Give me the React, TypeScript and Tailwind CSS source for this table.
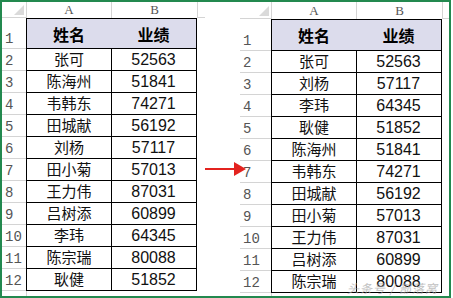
// App.tsx — two Excel ranges, before / after sort
const before: [string, string][] = [
  ["张可", "52563"],
  ["陈海州", "51841"],
  ["韦韩东", "74271"],
  ["田城献", "56192"],
  ["刘杨", "57117"],
  ["田小菊", "57013"],
  ["王力伟", "87031"],
  ["吕树添", "60899"],
  ["李玮", "64345"],
  ["陈宗瑞", "80088"],
  ["耿健", "51852"],
];

const after: [string, string][] = [
  ["张可", "52563"],
  ["刘杨", "57117"],
  ["李玮", "64345"],
  ["耿健", "51852"],
  ["陈海州", "51841"],
  ["韦韩东", "74271"],
  ["田城献", "56192"],
  ["田小菊", "57013"],
  ["王力伟", "87031"],
  ["吕树添", "60899"],
  ["陈宗瑞", "80088"],
];

const mono = "font-['Liberation_Mono',monospace] text-[14px] leading-[16px] text-[#555]";
const letter = "font-['Liberation_Serif',serif] text-[13px] text-[#555]";
const cjk = "font-['Noto_Sans_CJK_SC',sans-serif]";
const num = "font-['Liberation_Sans',sans-serif]";

interface SheetProps {
  rows: [string, string][];
  hdrW: string;
  colHdrH: string;
  row1H: string;
  width: string;
}

function Sheet({ rows, hdrW, colHdrH, row1H, width }: SheetProps) {
  return (
    <div className={`${width} h-full overflow-hidden flex flex-col bg-white`}>
      {/* Column header row */}
      <div className={`flex ${colHdrH} shrink-0`}>
        <div className={`${hdrW} shrink-0 relative border-r border-b border-[#d4d4d4]`}>
          <div className="absolute right-[2px] bottom-[2px] w-0 h-0 border-l-[10px] border-l-transparent border-b-[10px] border-b-[#dadada]" />
        </div>
        <div className={`w-[85px] shrink-0 flex items-center justify-center border-r border-[#d4d4d4] ${letter}`}>A</div>
        <div className={`w-[86px] shrink-0 flex items-center justify-center border-r border-[#d4d4d4] ${letter}`}>B</div>
        <div className="flex-1 border-b border-[#d4d4d4]" />
      </div>

      {/* Row 1: header */}
      <div className={`flex ${row1H} shrink-0`}>
        <div className={`${hdrW} shrink-0 flex items-end pl-[3px] pb-[1px] border-b border-[#d4d4d4] ${mono}`}>1</div>
        <div className={`w-[86px] shrink-0 -ml-px flex items-center justify-center bg-[#dcdcec] border border-black text-[16px] font-bold text-black ${cjk}`}>
          姓名
        </div>
        <div className={`w-[86px] shrink-0 -ml-px flex items-center justify-center bg-[#dcdcec] border-y border-r border-black text-[16px] font-bold text-black ${cjk}`}>
          业绩
        </div>
      </div>

      {rows.map(([name, score], i) => (
        <div key={i} className="flex h-[22px] shrink-0">
          <div className={`${hdrW} shrink-0 flex items-end pl-[3px] pb-[1px] border-b border-[#d4d4d4] ${mono}`}>{i + 2}</div>
          <div className={`w-[86px] shrink-0 -ml-px flex items-center justify-center border-x border-b border-black text-[15px] text-[#111] ${cjk}`}>
            {name}
          </div>
          <div className={`w-[86px] shrink-0 -ml-px flex items-center justify-center border-r border-b border-black text-[16px] text-[#111] ${num}`}>
            {score}
          </div>
        </div>
      ))}
      <div className="flex h-[6px] shrink-0">
        <div className={`${hdrW} shrink-0 border-r border-[#d4d4d4]`} />
      </div>
    </div>
  );
}

export default function App() {
  return (
    <div className="w-[453px] h-[298px] bg-white overflow-hidden">
      <div className="relative w-[451px] h-[298px] border-2 border-[#23894f] flex">
        <Sheet rows={before} hdrW="w-[25px]" colHdrH="h-[16px]" row1H="h-[31px]" width="w-[203px]" />

        {/* Arrow */}
        <div className="w-[35px] shrink-0 flex flex-col">
          <div className="h-[160px]" />
          <svg width="35" height="16" viewBox="0 0 35 16" className="overflow-visible relative z-10">
            <line x1="0" y1="7" x2="31" y2="7" stroke="#e3231f" strokeWidth="2" />
            <polygon points="29,0 41,7 29,14" fill="#e3231f" />
          </svg>
        </div>

        <Sheet rows={after} hdrW="w-[32px]" colHdrH="h-[17px]" row1H="h-[32px]" width="w-[209px]" />

        {/* Watermark */}
        <div className={`absolute left-[345px] top-[277px] text-[12px] italic text-[#a8a8a8] opacity-70 tracking-[1px] ${cjk}`}>
          头条号 / 部落窝教育
        </div>
      </div>
    </div>
  );
}
